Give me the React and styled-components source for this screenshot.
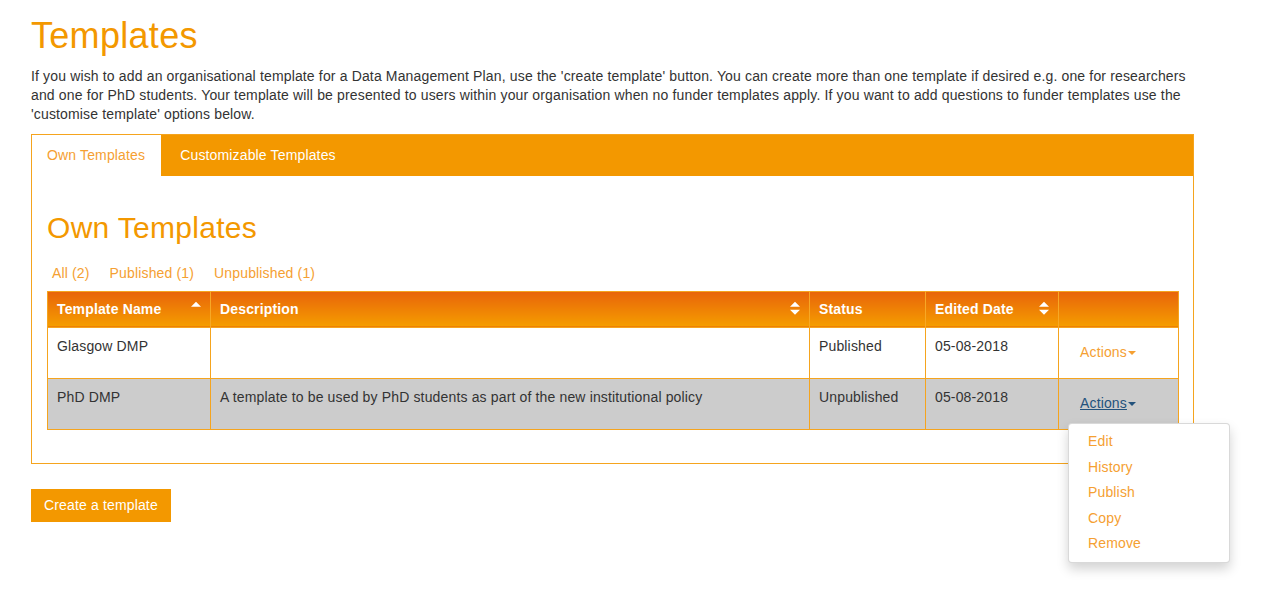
import React from 'react';
import styled, { createGlobalStyle } from 'styled-components';

const ORANGE = '#f39800';
const LINE = '#f5a41e';

const Global = createGlobalStyle`
  body {
    margin: 0;
    background: #fff;
    font-family: "Liberation Sans", Arial, sans-serif;
    font-size: 14px;
    line-height: 19.5px;
    letter-spacing: 0.15px;
    color: #333;
  }
`;

const Page = styled.div`
  padding: 16px 70px 80px 31px;
`;

const Title = styled.h1`
  margin: 0 0 11px;
  font-size: 36px;
  line-height: 39.6px;
  font-weight: normal;
  letter-spacing: 0.3px;
  color: ${ORANGE};
`;

const Intro = styled.p`
  margin: 0 0 10px;
  max-width: 1160px;
  line-height: 19px;
`;

const Panel = styled.div`
  border: 1px solid ${LINE};
  width: 1161px;
`;

const TabBar = styled.div`
  display: flex;
  background: ${ORANGE};
  height: 41px;
`;

const Tab = styled.div`
  line-height: 41px;
  padding: ${p => (p.$active ? '0 16px 0 15px' : '0 19px')};
  background: ${p => (p.$active ? '#fff' : 'transparent')};
  color: ${p => (p.$active ? '#f5a032' : '#fff')};
`;

const PanelBody = styled.div`
  padding: 35px 15px 33px;
`;

const SubTitle = styled.h2`
  margin: 0 0 19px;
  font-size: 30px;
  line-height: 33px;
  font-weight: normal;
  letter-spacing: 0.3px;
  color: ${ORANGE};
`;

const Filters = styled.div`
  display: flex;
  gap: 20px;
  padding-left: 5px;
  margin-bottom: 8px;
  line-height: 20px;
`;

const FilterLink = styled.a`
  color: #f5a032;
  text-decoration: none;
`;

const Table = styled.table`
  width: 1131px;
  table-layout: fixed;
  border-collapse: collapse;
  border: 1px solid ${LINE};
`;

const Th = styled.th`
  position: relative;
  box-sizing: border-box;
  height: 36px;
  padding: 1px 10px 0 9px;
  text-align: left;
  font-weight: bold;
  color: #fff;
  background: linear-gradient(to bottom, #e8640a, #f59d00);
  border-right: 1px solid #f7a826;
  &:last-child { border-right: none; }
`;

const SortIcon = styled.svg`
  position: absolute;
  right: 8px;
  top: 50%;
  transform: translateY(-55%);
`;

const Row = styled.tr`
  background: ${p => (p.$shade ? '#cccccc' : '#fff')};
`;

const Td = styled.td`
  box-sizing: border-box;
  height: 51px;
  padding: 9px 10px 9px 9px;
  vertical-align: top;
  border: 1px solid ${LINE};
  line-height: 19.5px;
`;

const ActionsWrap = styled.div`
  position: relative;
  display: inline-block;
  margin-top: 6px;
`;

const ActionsLink = styled.a`
  display: inline-block;
  padding: 0 12px;
  color: ${p => (p.$open ? '#23527c' : '#f5a032')};
  text-decoration: ${p => (p.$open ? 'underline' : 'none')};
  cursor: pointer;
`;

const Caret = styled.span`
  display: inline-block;
  width: 0;
  height: 0;
  margin-left: 1px;
  vertical-align: middle;
  border-top: 4px solid currentColor;
  border-left: 4px solid transparent;
  border-right: 4px solid transparent;
`;

const Menu = styled.ul`
  position: absolute;
  top: calc(100% + 10px);
  left: 0;
  z-index: 5;
  box-sizing: border-box;
  width: 162px;
  margin: 0;
  padding: 5px 0;
  list-style: none;
  background: #fff;
  border: 1px solid rgba(0, 0, 0, 0.15);
  border-radius: 4px;
  box-shadow: 0 6px 12px rgba(0, 0, 0, 0.175);
`;

const MenuItem = styled.li`
  padding: 3px 19px;
  line-height: 19.6px;
  color: #f5a032;
`;

const CreateButton = styled.button`
  margin-top: 25px;
  padding: 6px 12px;
  font-family: inherit;
  font-size: 14px;
  line-height: 19.5px;
  letter-spacing: 0.15px;
  color: #fff;
  background: ${ORANGE};
  border: 1px solid ${ORANGE};
  border-radius: 0;
`;

const Sort = ({ both }) => (
  <SortIcon width="12" height="14" viewBox="0 0 12 14">
    <path d="M1 5.5 L6 0.5 L11 5.5 Z" fill="#fff" />
    {both && <path d="M1 8.5 L11 8.5 L6 13.5 Z" fill="#fff" />}
  </SortIcon>
);

const rows = [
  { name: 'Glasgow DMP', desc: '', status: 'Published', date: '05-08-2018' },
  {
    name: 'PhD DMP',
    desc: 'A template to be used by PhD students as part of the new institutional policy',
    status: 'Unpublished',
    date: '05-08-2018',
    open: true,
  },
];

export default function App() {
  return (
    <Page>
      <Global />
      <Title>Templates</Title>
      <Intro>
        If you wish to add an organisational template for a Data Management Plan, use the 'create template' button. You can create more than one template if desired e.g. one for researchers and one for PhD students. Your template will be presented to users within your organisation when no funder templates apply. If you want to add questions to funder templates use the 'customise template' options below.
      </Intro>
      <Panel>
        <TabBar>
          <Tab $active>Own Templates</Tab>
          <Tab>Customizable Templates</Tab>
        </TabBar>
        <PanelBody>
          <SubTitle>Own Templates</SubTitle>
          <Filters>
            <FilterLink>All (2)</FilterLink>
            <FilterLink>Published (1)</FilterLink>
            <FilterLink>Unpublished (1)</FilterLink>
          </Filters>
          <Table>
            <colgroup>
              <col style={{ width: 163 }} />
              <col style={{ width: 599 }} />
              <col style={{ width: 116 }} />
              <col style={{ width: 133 }} />
              <col style={{ width: 120 }} />
            </colgroup>
            <thead>
              <tr>
                <Th>Template Name<Sort /></Th>
                <Th>Description<Sort both /></Th>
                <Th>Status</Th>
                <Th>Edited Date<Sort both /></Th>
                <Th />
              </tr>
            </thead>
            <tbody>
              {rows.map((r, i) => (
                <Row key={r.name} $shade={i % 2 === 1}>
                  <Td>{r.name}</Td>
                  <Td>{r.desc}</Td>
                  <Td>{r.status}</Td>
                  <Td>{r.date}</Td>
                  <Td>
                    <ActionsWrap>
                      <ActionsLink $open={r.open}>Actions<Caret /></ActionsLink>
                      {r.open && (
                        <Menu>
                          {['Edit', 'History', 'Publish', 'Copy', 'Remove'].map(m => (
                            <MenuItem key={m}>{m}</MenuItem>
                          ))}
                        </Menu>
                      )}
                    </ActionsWrap>
                  </Td>
                </Row>
              ))}
            </tbody>
          </Table>
        </PanelBody>
      </Panel>
      <CreateButton>Create a template</CreateButton>
    </Page>
  );
}
